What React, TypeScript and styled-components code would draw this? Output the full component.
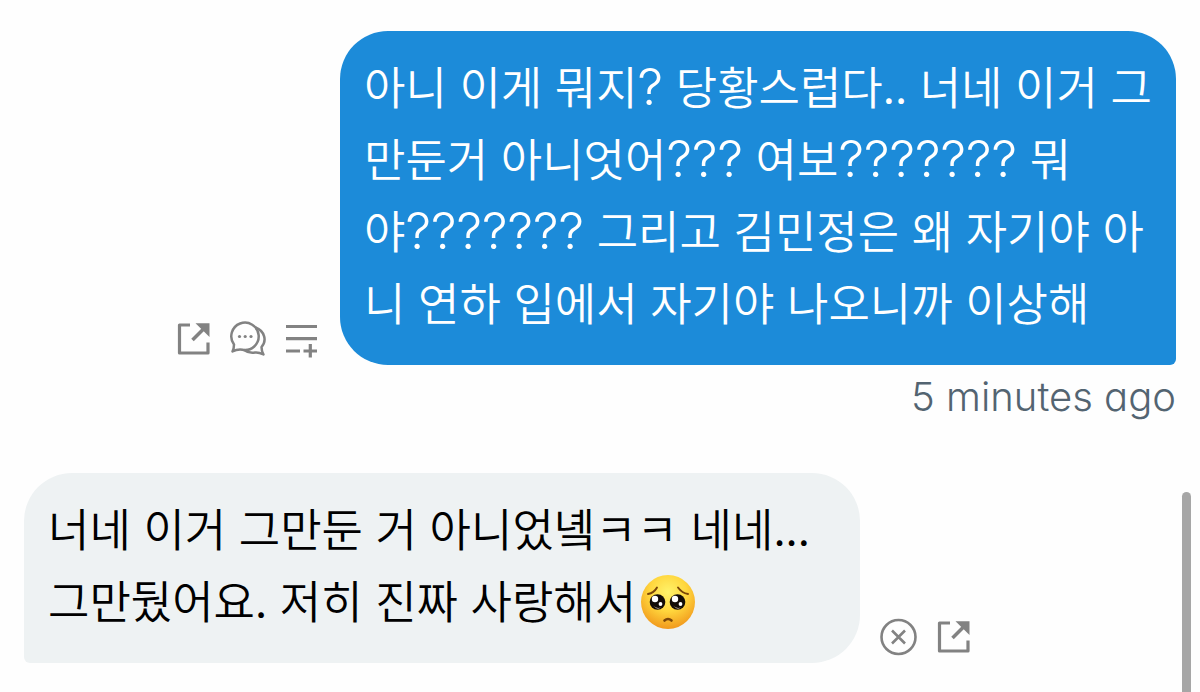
import React from "react";
import styled, { createGlobalStyle } from "styled-components";

const GlobalStyle = createGlobalStyle`
  * { box-sizing: border-box; }
  body { margin: 0; background: #fefefe; }
`;

const Thread = styled.main`
  position: relative;
  display: flex;
  flex-direction: column;
  min-height: 100vh;
  padding: 31px 24px 28px;
  font-family: "Noto Sans CJK KR", "Noto Sans", sans-serif;
`;

const Row = styled.article<{ $own?: boolean }>`
  display: flex;
  align-items: flex-end;
  justify-content: ${(p) => (p.$own ? "flex-end" : "flex-start")};
  gap: 20px;
`;

const Bubble = styled.p<{ $own?: boolean }>`
  margin: 0;
  width: 836px;
  max-width: 75%;
  padding: 19px 24px 27px;
  font-size: 45px;
  font-weight: 350;
  line-height: 72px;
  color: ${(p) => (p.$own ? "#ffffff" : "#000000")};
  background: ${(p) => (p.$own ? "#1c8bd9" : "#eef2f3")};
  border-radius: ${(p) => (p.$own ? "48px 48px 6px 48px" : "48px 48px 48px 6px")};
`;

const Marks = styled.span`
  font-family: Inter, sans-serif;
  font-size: 51px;
  font-weight: 300;
  line-height: 1;
`;

const Actions = styled.div`
  display: flex;
  gap: 16px;
  padding-bottom: 7px;
`;

const IconButton = styled.button`
  display: flex;
  padding: 0;
  border: 0;
  background: none;
  color: #828282;
  cursor: pointer;
`;

const Time = styled.time`
  align-self: flex-end;
  margin-bottom: 44px;
  font-family: Inter, sans-serif;
  font-size: 40px;
  font-weight: 300;
  font-feature-settings: "cv11";
  line-height: 64px;
  color: #536471;
`;

const Emoji = styled.svg`
  width: 56px;
  height: 56px;
  margin-left: 4px;
  vertical-align: -11px;
`;

const ScrollThumb = styled.div`
  position: absolute;
  top: 492px;
  right: 9px;
  bottom: 0;
  width: 9px;
  border-radius: 5px 5px 0 0;
  background: #a6a6a6;
`;

const Icon = ({ children }: { children: React.ReactNode }) => (
  <svg width="38" height="38" viewBox="0 0 38 38" fill="none" stroke="currentColor" strokeWidth="3" aria-hidden="true">
    {children}
  </svg>
);

const OpenIcon = () => (
  <Icon>
    <path d="M16 5H5.500V33H34V22.500" strokeWidth="3.200" strokeLinejoin="round" />
    <path d="M18.500 20L30 8.500" strokeWidth="3.6" />
    <path d="M21.500 3.300H35.500V17Z" fill="currentColor" stroke="none" />
  </Icon>
);

const ChatIcon = () => (
  <Icon>
    <path d="M6 24.500A13.700 13.700 0 1 1 14.500 29.800Q9.500 29 4.500 31.500Q6 28.500 6 24.500Z" strokeWidth="2.500" strokeLinejoin="round" />
    <path d="M27.500 7.500C37 11 39 21 33.500 27Q33.500 31 35.500 34.500Q30.500 32 27 32.500Q20.500 33.500 15.500 29.800" strokeWidth="2.500" strokeLinejoin="round" />
    <g fill="currentColor" stroke="none">
      <circle cx="11.500" cy="16.500" r="1.600" />
      <circle cx="17.200" cy="16.500" r="1.600" />
      <circle cx="23" cy="16.500" r="1.600" />
    </g>
  </Icon>
);

const AddListIcon = () => (
  <Icon>
    <path d="M4 6.500H35M4 18.700H35M4 31H18M21.500 31H35M28.300 24V37.500" strokeWidth="3.200" />
  </Icon>
);

const CloseIcon = () => (
  <Icon>
    <circle cx="18.500" cy="19" r="17" strokeWidth="2.600" />
    <path d="M12 12.500L25 25.500M25 12.500L12 25.500" strokeWidth="2.600" />
  </Icon>
);

const PleadingFace = () => (
  <Emoji viewBox="0 0 56 56" role="img" aria-label="pleading face">
    <defs>
      <radialGradient id="face" cx="50%" cy="32%" r="70%">
        <stop offset="0" stopColor="#fff36a" />
        <stop offset="0.5" stopColor="#ffd63d" />
        <stop offset="1" stopColor="#f0951a" />
      </radialGradient>
    </defs>
    <circle cx="28" cy="28" r="27" fill="url(#face)" />
    <g fill="none" stroke="#7a4508" strokeWidth="1.900" strokeLinecap="round">
      <path d="M8 20Q14 19 17 13.500" />
      <path d="M48 20Q42 19 38 13.500" />
      <path d="M24.500 46.500Q28 43.500 31.500 46.500" strokeWidth="2.600" />
    </g>
    <g fill="#130c08">
      <circle cx="17.500" cy="28" r="7.800" />
      <circle cx="37.500" cy="28" r="7.800" />
    </g>
    <g fill="#ffffff">
      <circle cx="15" cy="25" r="3.200" />
      <circle cx="35" cy="25" r="3.200" />
      <circle cx="20.500" cy="30" r="1.900" />
      <circle cx="40.500" cy="30" r="1.900" />
      <path d="M13 31.500Q16 35 21 33.500Q17 36.500 13 31.500ZM33 31.500Q36 35 41 33.500Q37 36.500 33 31.500Z" fill="#c9b6a8" />
    </g>
  </Emoji>
);

export default function App() {
  return (
    <>
      <GlobalStyle />
      <Thread lang="ko">
        <Row $own>
          <Actions>
            <IconButton aria-label="Open"><OpenIcon /></IconButton>
            <IconButton aria-label="Replies"><ChatIcon /></IconButton>
            <IconButton aria-label="Add to list"><AddListIcon /></IconButton>
          </Actions>
          <Bubble $own>
            아니 이게 뭐지<Marks>?</Marks> 당황스럽다.. 너네 이거 그만둔거 아니엇어<Marks>???</Marks> 여보<Marks>???????</Marks> 뭐야<Marks>???????</Marks> 그리고 김민정은 왜 자기야 아니 연하 입에서 자기야 나오니까 이상해
          </Bubble>
        </Row>
        <Time>5 minutes ago</Time>
        <Row>
          <Bubble>
            너네 이거 그만둔 거 아니었녴ㅋㅋ 네네... 그만뒀어요. 저히 진짜 사랑해서<PleadingFace />
          </Bubble>
          <Actions>
            <IconButton aria-label="Dismiss"><CloseIcon /></IconButton>
            <IconButton aria-label="Open"><OpenIcon /></IconButton>
          </Actions>
        </Row>
        <ScrollThumb />
      </Thread>
    </>
  );
}
